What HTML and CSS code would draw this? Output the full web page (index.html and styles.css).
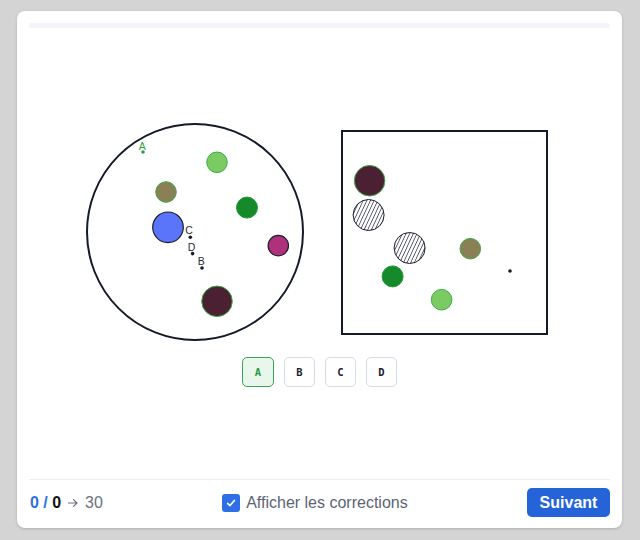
FILE: index.html
```html
<!DOCTYPE html>
<html lang="fr">
<head>
<meta charset="utf-8">
<title>Exercice</title>
<link rel="stylesheet" href="styles.css">
</head>
<body>
<div class="card">
  <div class="progress"></div>
  <div class="main">
    <div class="diagrams">
      <svg class="circle-fig" width="220" height="220" viewBox="0 0 220 220">
        <circle cx="110" cy="110" r="108" fill="#fff" stroke="#151a28" stroke-width="2"/>
        <circle cx="132" cy="40.3" r="10.3" fill="#7acb62" stroke="#3daa48" stroke-width="1"/>
        <circle cx="81" cy="70" r="10.3" fill="#8a7f55" stroke="#3daa48" stroke-width="1"/>
        <circle cx="162" cy="85.6" r="10.5" fill="#168a2b" stroke="#1f9a36" stroke-width="1"/>
        <circle cx="83" cy="105.3" r="15.3" fill="#5b75fa" stroke="#1a1d2b" stroke-width="1.2"/>
        <circle cx="193.3" cy="123.6" r="10.2" fill="#b0317b" stroke="#1a1d2b" stroke-width="1.2"/>
        <circle cx="132" cy="179.3" r="15.3" fill="#4b2032" stroke="#3daa48" stroke-width="1"/>
        <circle cx="58" cy="30" r="1.8" fill="#2f9e45"/>
        <text class="lbl lbl-a" x="57.3" y="27.6">A</text>
        <circle cx="105.3" cy="115.3" r="1.8" fill="#151a28"/>
        <text class="lbl" x="104" y="112.3">C</text>
        <circle cx="107.6" cy="131.6" r="1.8" fill="#151a28"/>
        <text class="lbl" x="106.6" y="128.6">D</text>
        <circle cx="117" cy="146" r="1.8" fill="#151a28"/>
        <text class="lbl" x="116.3" y="142.9">B</text>
      </svg>
      <svg class="square-fig" width="207" height="205" viewBox="0 0 207 205">
        <defs>
          <pattern id="hatch" width="3.3" height="3.3" patternUnits="userSpaceOnUse" patternTransform="rotate(25)">
            <line x1="0" y1="0" x2="0" y2="3.3" stroke="#1a1d2b" stroke-width="1.3"/>
          </pattern>
        </defs>
        <rect x="1" y="1" width="205" height="203" fill="#fff" stroke="#151a28" stroke-width="2"/>
        <circle cx="28.6" cy="50.7" r="15.3" fill="#4b2032" stroke="#3daa48" stroke-width="1"/>
        <circle cx="27.6" cy="85" r="15.5" fill="url(#hatch)" stroke="#1a1d2b" stroke-width="1"/>
        <circle cx="68.6" cy="118" r="15.5" fill="url(#hatch)" stroke="#1a1d2b" stroke-width="1"/>
        <circle cx="129.3" cy="118.7" r="10.3" fill="#8a7f55" stroke="#3daa48" stroke-width="1"/>
        <circle cx="51.6" cy="146.4" r="10.5" fill="#168a2b" stroke="#1f9a36" stroke-width="1"/>
        <circle cx="100.6" cy="169.7" r="10.3" fill="#7acb62" stroke="#3daa48" stroke-width="1"/>
        <circle cx="169" cy="141" r="1.8" fill="#151a28"/>
      </svg>
    </div>
    <div class="options">
      <button class="opt opt-selected">A</button>
      <button class="opt">B</button>
      <button class="opt">C</button>
      <button class="opt">D</button>
    </div>
  </div>
  <div class="footer">
    <div class="score"><span class="score-cur">0 /</span> <span class="score-total">0</span> <span class="score-goal"><svg class="arrow" width="10" height="10" viewBox="0 0 10 10" aria-label="→"><path d="M0.5 5 H9 M5.5 1.6 L9 5 L5.5 8.4" fill="none" stroke="#6b7280" stroke-width="1.2" stroke-linecap="round" stroke-linejoin="round"/></svg> 30</span></div>
    <label class="toggle">
      <span class="checkbox">
        <svg width="12" height="12" viewBox="0 0 12 12"><path d="M2.6 6.3 L5 8.6 L9.4 3.4" fill="none" stroke="#fff" stroke-width="1.6" stroke-linecap="round" stroke-linejoin="round"/></svg>
      </span>
      <span class="toggle-text">Afficher les corrections</span>
    </label>
    <button class="next">Suivant</button>
  </div>
</div>
</body>
</html>
```

FILE: styles.css
```css
html, body {
  margin: 0;
  padding: 0;
}
body {
  background: #d4d4d4;
  font-family: "Liberation Sans", Arial, sans-serif;
  width: 640px;
  height: 540px;
  overflow: hidden;
}
.card {
  box-sizing: border-box;
  margin: 11px 0 0 17px;
  width: 605px;
  height: 517px;
  background: #fff;
  border-radius: 8px;
  box-shadow: 0 1px 3px rgba(0, 0, 0, 0.18);
  padding: 12px 12px 0;
  display: flex;
  flex-direction: column;
}
.progress {
  height: 5px;
  border-radius: 3px;
  background: #f2f4f7;
  flex: none;
}
.main {
  flex: 1;
  display: flex;
  flex-direction: column;
  align-items: center;
  justify-content: center;
  padding-top: 2px;
}
.diagrams {
  display: flex;
  align-items: center;
  gap: 36px;
  padding-right: 7px;
}
.diagrams svg {
  display: block;
}
.lbl {
  font-family: "Liberation Sans", Arial, sans-serif;
  font-size: 10.5px;
  fill: #2a2d36;
  text-anchor: middle;
}
.lbl-a {
  fill: #2f9e45;
}
.options {
  display: flex;
  gap: 10px;
  margin-top: 15px;
}
.opt {
  box-sizing: border-box;
  width: 31px;
  height: 30px;
  border: 1.5px solid #d6dce6;
  border-radius: 5px;
  background: #fff;
  font-family: "DejaVu Sans Mono", "Liberation Mono", monospace;
  font-weight: bold;
  font-size: 10.5px;
  color: #1c2230;
  padding: 0;
  display: flex;
  align-items: center;
  justify-content: center;
}
.opt-selected {
  background: #e8f6eb;
  border-color: #3aa457;
  color: #2b9a47;
  width: 32px;
}
.footer {
  flex: none;
  height: 49px;
  box-sizing: border-box;
  border-top: 1px solid #eceef2;
  padding: 8px 0 11px;
  display: flex;
  align-items: center;
  justify-content: space-between;
}
.score {
  font-size: 16px;
  color: #6b7280;
  padding-left: 1px;
}
.arrow {
  display: inline-block;
  vertical-align: 0;
  margin: 0 3px 0 2px;
}
.score-cur {
  color: #2f6fe6;
  font-weight: 600;
}
.score-total {
  color: #111;
  font-weight: 600;
}
.toggle {
  display: flex;
  align-items: center;
  gap: 6px;
}
.checkbox {
  width: 18px;
  height: 18px;
  border-radius: 3px;
  background: #2f6fe6;
  display: flex;
  align-items: center;
  justify-content: center;
}
.checkbox svg {
  display: block;
}
.toggle-text {
  font-size: 16px;
  color: #5b6475;
}
.next {
  box-sizing: border-box;
  width: 83px;
  height: 29px;
  border: none;
  border-radius: 5px;
  background: #2563d9;
  color: #fff;
  font-family: "Liberation Sans", Arial, sans-serif;
  font-weight: bold;
  font-size: 16px;
  padding: 0;
}
```
